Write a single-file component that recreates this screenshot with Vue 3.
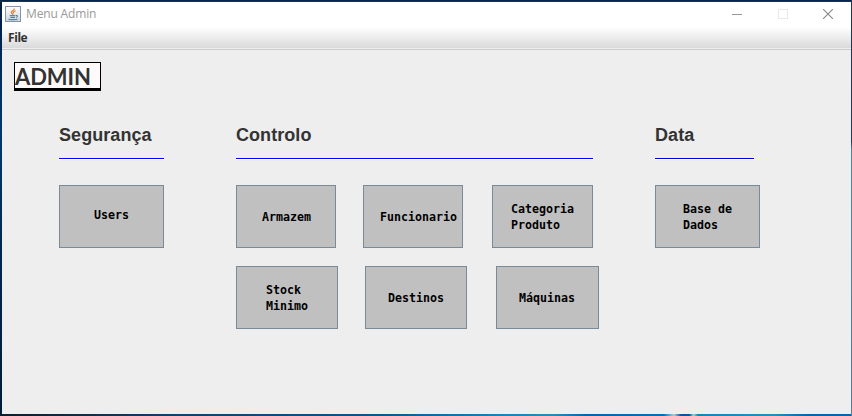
<script setup>
const groups = [
  { id: 'seguranca', title: 'Segurança', rows: [[{ id: 'users', lines: ['Users'] }]] },
  {
    id: 'controlo',
    title: 'Controlo',
    rows: [
      [
        { id: 'armazem', lines: ['Armazem'] },
        { id: 'funcionario', lines: ['Funcionario'] },
        { id: 'categoria', lines: ['Categoria', 'Produto'] },
      ],
      [
        { id: 'stock', lines: ['Stock', 'Minimo'] },
        { id: 'destinos', lines: ['Destinos'] },
        { id: 'maquinas', lines: ['Máquinas'] },
      ],
    ],
  },
  { id: 'data', title: 'Data', rows: [[{ id: 'base', lines: ['Base de', 'Dados'] }]] },
]
</script>

<template>
  <div class="desktop">
    <div class="window">
      <header class="titlebar">
        <svg class="java" width="16" height="16" viewBox="0 0 16 16">
          <defs>
            <linearGradient id="tile" x1="0" y1="0" x2="0" y2="1">
              <stop offset="0" stop-color="#fff" />
              <stop offset="1" stop-color="#cbd5dd" />
            </linearGradient>
          </defs>
          <rect x=".5" y=".5" width="15" height="15" fill="url(#tile)" stroke="#8496a6" />
          <path d="M9.200 2.500C10 4.500 6 4.800 6.300 6.500C6.500 7.500 7.800 7.800 8 9M10.700 4.800C8.500 5.500 7.600 6.400 8.600 7.400" fill="none" stroke="#e9731c" stroke-width="1.100" />
          <path d="M4.800 9.700H10.500M5.300 11.400H10M3.500 13.300C5.500 13.900 10.500 13.900 12.500 13.100M11 9.600C13.300 9 13 11 11 11.400" fill="none" stroke="#426f91" stroke-width="1" />
        </svg>
        <span class="caption">Menu Admin</span>
        <div class="controls">
          <svg width="10" height="10"><path d="M0 5.500H10" stroke="#999" /></svg>
          <svg width="10" height="10"><rect x=".5" y=".5" width="9" height="9" fill="none" stroke="#e8e8e8" /></svg>
          <svg width="10" height="10"><path d="M0 0L10 10M10 0L0 10" stroke="#888" stroke-width="1.100" /></svg>
        </div>
      </header>
      <nav class="menubar">File</nav>
      <main class="content">
        <h1 class="badge">ADMIN</h1>
        <div class="groups">
          <section v-for="g in groups" :key="g.id" :class="['group', g.id]">
            <h2>{{ g.title }}</h2>
            <div class="rule"></div>
            <div v-for="(row, i) in g.rows" :key="i" :class="['row', 'row' + i]">
              <button v-for="b in row" :key="b.id" :class="b.id">
                <span v-for="l in b.lines" :key="l">{{ l }}</span>
              </button>
            </div>
          </section>
        </div>
      </main>
    </div>
  </div>
</template>

<style>
body { margin: 0; overflow: hidden; }
</style>

<style scoped>
.desktop {
  box-sizing: border-box;
  width: 852px;
  height: 416px;
  padding: 2px 1px 2px 2px;
  background:
    linear-gradient(90deg, #0c1c30, #12406a 20%, #125587 45%, #1686b0 59%, #2a8cae 65%, #0864a4 69%, #0870b0 78%, #c2c8b4 79.200%, #0755a0 80%, #0755a0 81%, #c2c8b4 81.500%, #1686b0 82%, #2291b4 91%, #0864a4 95%, #0864a4) 0 414px / 851px 2px no-repeat,
    linear-gradient(#1c3550, #1d3c5c 34%, #4b88a0 36%, #4b7f9d) 851px 0 / 1px 416px no-repeat,
    linear-gradient(#001e43, #203a5c) 0 0 / 852px 2px no-repeat,
    linear-gradient(#001d43, #00396f 32%, #00284f 60%, #001d3b);
}
.window {
  display: flex;
  flex-direction: column;
  height: 412px;
  background: #eee;
}
.titlebar {
  display: flex;
  align-items: center;
  box-sizing: border-box;
  height: 25px;
  padding: 0 18px 1px 3px;
  background: #fff;
}
.caption {
  margin-left: 5px;
  font: 12px/16px "Open Sans", "Noto Sans", sans-serif;
  letter-spacing: -.15px;
  color: #999;
}
.controls { display: flex; gap: 35px; margin-left: auto; }
.controls svg { display: block; }
.controls svg:first-child { margin-right: 1px; }
.menubar {
  box-sizing: border-box;
  height: 23px;
  padding: 1px 0 0 6px;
  border-bottom: 1px solid #ccc;
  background: linear-gradient(#fff, #dadada 21px, #eee 21px);
  font: bold 12px/19px "Noto Sans", "Open Sans", sans-serif;
  letter-spacing: -.4px;
  color: #333;
}
.content { padding: 12px 0 0 12px; }
.badge {
  box-sizing: border-box;
  width: 87px;
  height: 29px;
  margin: 0;
  border: 1px solid #000;
  border-bottom-width: 3px;
  background: #fffafa;
  font: 700 22px/27px Lato, "Open Sans", sans-serif;
  letter-spacing: -.1px;
  color: #333;
}
.groups { display: flex; padding: 34px 0 0 45px; }
.seguranca { width: 105px; margin-right: 72px; }
.controlo { width: 363px; margin-right: 56px; }
.data { width: 105px; }
h2 {
  margin: 0;
  font: bold 18px/21px "Liberation Sans", Arial, sans-serif;
  letter-spacing: .06px;
  color: #333;
}
.rule {
  height: 1px;
  margin: 12px 0 25px;
  border-bottom: 1px solid #fff;
  background: #00f;
}
.controlo .rule { width: 357px; }
.data .rule { width: 99px; background: #0000d8; }
.row { display: flex; }
.row1 { margin-top: 18px; }
button {
  display: flex;
  flex: none;
  flex-direction: column;
  align-items: flex-start;
  justify-content: center;
  box-sizing: border-box;
  height: 63px;
  margin: 0;
  padding: 1px 0 0;
  border: 1px solid #7a8a99;
  border-radius: 0;
  background: #c0c0c0;
  font: bold 11.630px/16px "DejaVu Sans Mono", monospace;
  color: #000;
  white-space: pre;
}
.users { width: 105px; padding: 0 0 3px 34px; }
.armazem { width: 100px; padding-left: 25px; }
.funcionario { width: 100px; margin-left: 27px; padding-left: 16px; }
.categoria { width: 101px; margin-left: 29px; padding-left: 18px; }
.stock { width: 102px; padding-left: 29px; }
.destinos { width: 102px; margin-left: 27px; padding-left: 22px; }
.maquinas { width: 103px; margin-left: 29px; padding-left: 22px; }
.base { width: 105px; padding-left: 27px; }
</style>
